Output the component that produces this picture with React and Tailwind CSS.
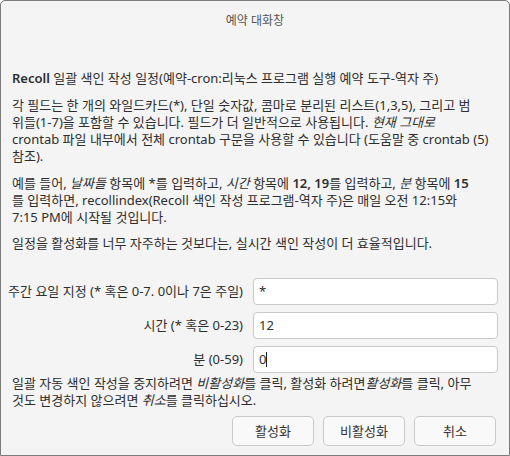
import React from "react";

const font = { fontFamily: '"Noto Sans", "Noto Sans CJK KR", sans-serif' };

function Field({ label, value, caret }) {
  return (
    <div className="flex items-center h-[27px]">
      <div className="w-[243px] pr-[1px] text-right whitespace-nowrap">{label}</div>
      <div className="ml-[9px] w-[245px] h-[27px] bg-white border border-[#c9c9c9] rounded-[4px] flex items-center pl-[5px]">
        <span>{value}</span>
        {caret && <span className="inline-block w-px h-[15px] bg-[#222]"></span>}
      </div>
    </div>
  );
}

function Btn({ children }) {
  return (
    <button className="w-[82px] h-[30px] rounded-[5px] border border-[#c9c9c9] bg-[#f9f9f9] text-[13px] text-[#333]">
      {children}
    </button>
  );
}

export default function App() {
  return (
    <div style={font} className="w-[510px] h-[456px] bg-[#f4f4f4] border border-[#7c7c7c] rounded-t-[5px] text-[13px] leading-[17px] text-[#2e2e2e] overflow-hidden">
      <div className="h-[38px] flex items-center justify-center text-[12px] text-[#555]">예약 대화창</div>
      <div className="px-[11px] pt-[31px]">
        <p className="whitespace-nowrap"><b className="font-semibold">Recoll</b> 일괄 색인 작성 일정(예약-cron:리눅스 프로그램 실행 예약 도구-역자 주)</p>
        <p className="mt-[10px] whitespace-nowrap">
          각 필드는 한 개의 와일드카드(*), 단일 숫자값, 콤마로 분리된 리스트(1,3,5), 그리고 범<br />
          위들(1-7)을 포함할 수 있습니다. 필드가 더 일반적으로 사용됩니다. <i>현재 그대로</i><br />
          crontab 파일 내부에서 전체 crontab 구문을 사용할 수 있습니다 (도움말 중 crontab (5)<br />
          참조).
        </p>
        <p className="mt-[10px] whitespace-nowrap">
          예를 들어, <i>날짜들</i> 항목에 *를 입력하고, <i>시간</i> 항목에 <b className="font-semibold">12, 19</b>를 입력하고, <i>분</i> 항목에 <b className="font-semibold">15</b><br />
          를 입력하면, recollindex(Recoll 색인 작성 프로그램-역자 주)은 매일 오전 12:15와<br />
          7:15 PM에 시작될 것입니다.
        </p>
        <p className="mt-[9px] whitespace-nowrap">일정을 활성화를 너무 자주하는 것보다는, 실시간 색인 작성이 더 효율적입니다.</p>
      </div>
      <div className="mt-[26px] flex flex-col gap-[7px]">
        <Field label="주간 요일 지정 (* 혹은 0-7. 0이나 7은 주일)" value="*" />
        <Field label="시간 (* 혹은 0-23)" value="12" />
        <Field label="분 (0-59)" value="0" caret />
      </div>
      <p className="px-[11px] mt-[2px] whitespace-nowrap">
        일괄 자동 색인 작성을 중지하려면 <i>비활성화</i>를 클릭, 활성화 하려면<i>활성화</i>를 클릭, 아무<br />
        것도 변경하지 않으려면 <i>취소</i>를 클릭하십시오.
      </p>
      <div className="mt-[7px] pr-[13px] flex justify-end gap-[9px]">
        <Btn>활성화</Btn>
        <Btn>비활성화</Btn>
        <Btn>취소</Btn>
      </div>
    </div>
  );
}
